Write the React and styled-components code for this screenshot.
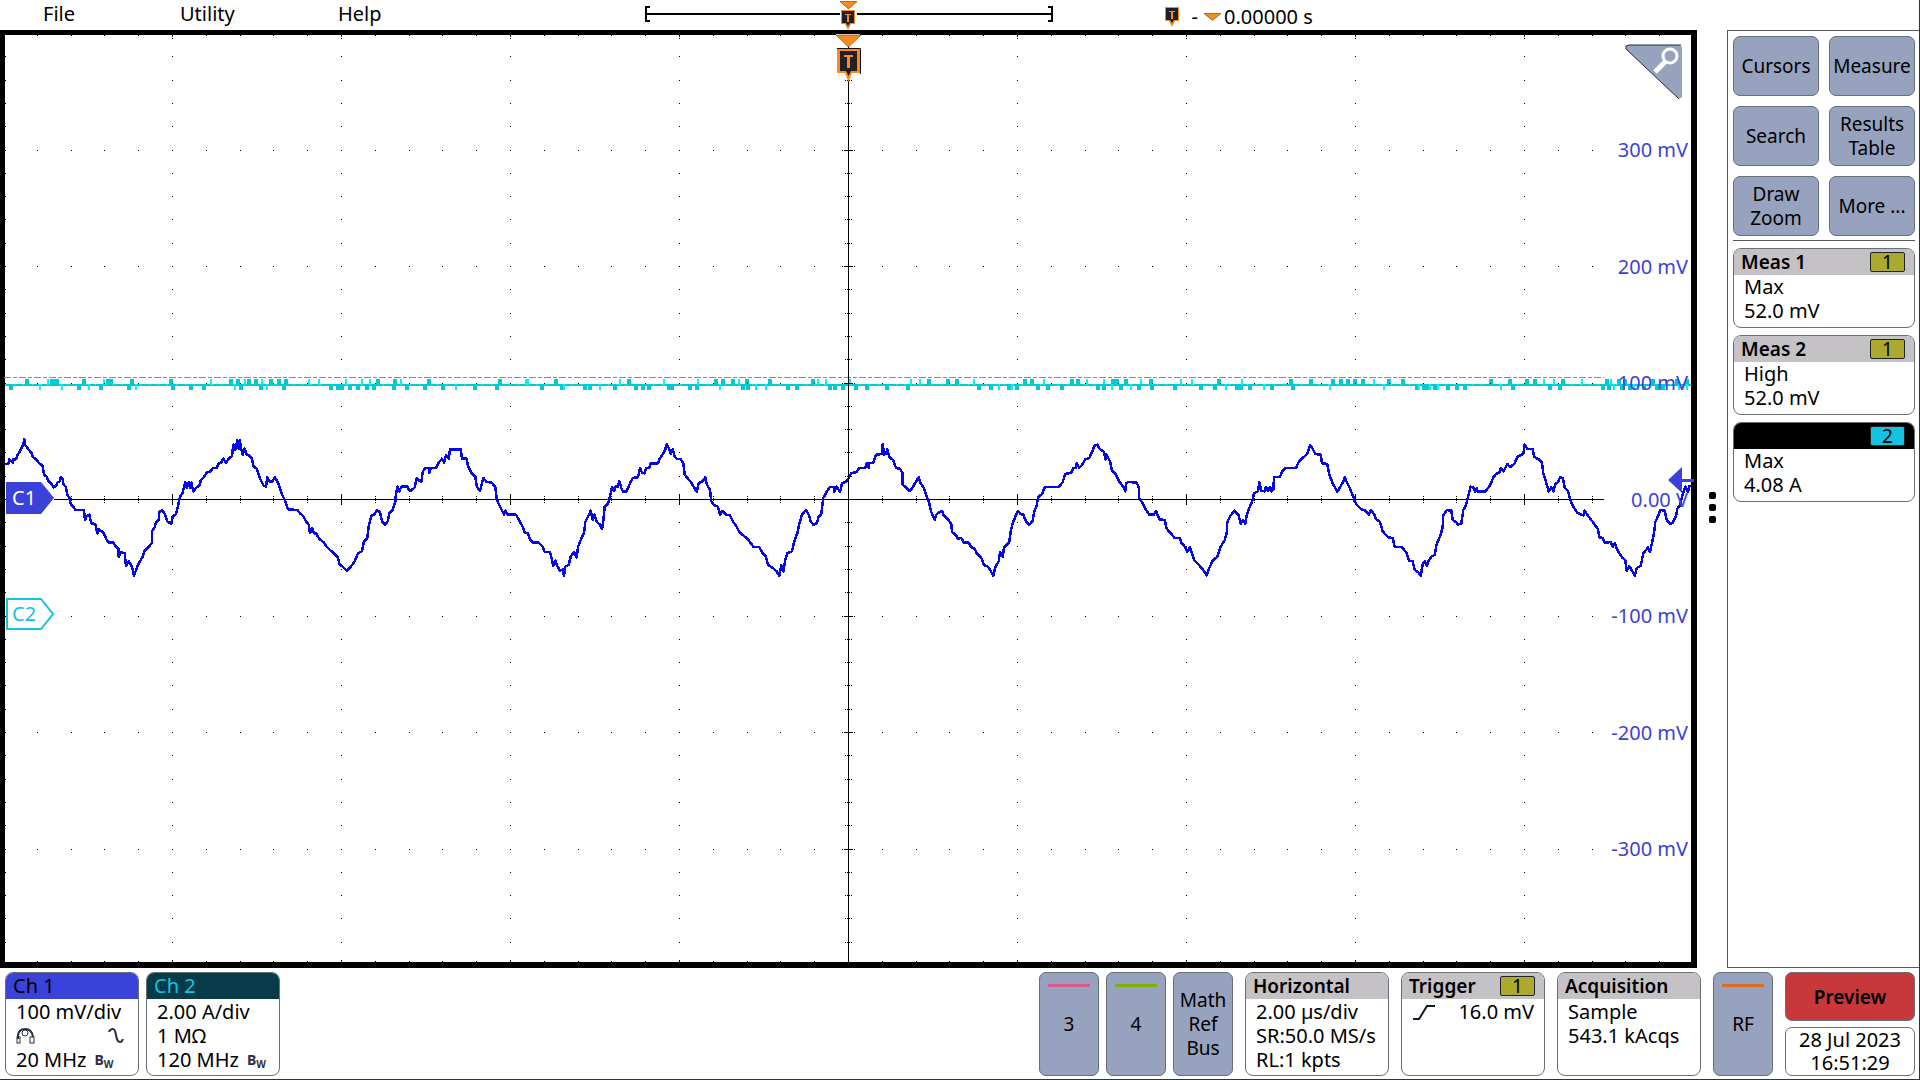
import React from "react";
import styled, { createGlobalStyle } from "styled-components";

const FONT = '"Noto Sans", "Open Sans", sans-serif';
const C = {
  ch1: "#3b42d9",
  ch2: "#14c3e0",
  steel: "#96a2be",
  edge: "#697078",
  head: "#c5c2c6",
  olive: "#aba92f",
  orange: "#f68b1f",
  dark: "#231f26",
};

const GlobalStyle = createGlobalStyle`
  * { box-sizing: border-box; }
  html, body, #root { height: 100%; }
  body { margin: 0; background: #fff; color: #000; font: 20px/24px ${FONT}; }
  button { font: inherit; color: inherit; cursor: pointer; margin: 0; }
`;

const Screen = styled.div`
  display: flex;
  flex-direction: column;
  height: 100vh;
  min-height: 720px;
  overflow: hidden;
  border-right: 1px solid #2c3440;
  border-bottom: 1px solid #2c3440;
`;

const MenuBar = styled.header`
  display: flex;
  flex: none;
  height: 30px;
  padding-left: 43px;
`;

const MenuItem = styled.button`
  width: ${(p) => p.$slot}px;
  padding: 0 0 2px;
  border: 0;
  background: none;
  text-align: left;
`;

const Ruler = styled.svg`
  display: block;
  flex: none;
`;

const Delay = styled.div`
  display: flex;
  align-items: center;
  margin-left: 110px;
  padding-top: 4px;
  white-space: pre;
`;

const Main = styled.main`
  display: flex;
  flex: 1;
  min-height: 0;
`;

const PlotFrame = styled.section`
  display: grid;
  flex: 1;
  min-width: 0;
  min-height: 0;
  border: solid #000;
  border-width: 5px 6px 6px 5px;
`;

const PlotSvg = styled.svg`
  display: block;
  width: 100%;
  height: 100%;
  min-height: 0;
  overflow: visible;
  font: 20px ${FONT};
`;

const Handle = styled.button`
  display: flex;
  flex-direction: column;
  align-items: center;
  justify-content: center;
  gap: 5px;
  width: 30px;
  padding: 17px 0 0;
  border: 0;
  background: none;
`;

const HandleDot = styled.span`
  width: 7px;
  height: 7px;
  border-radius: 2px;
  background: #000;
`;

const Sidebar = styled.aside`
  display: flex;
  flex-direction: column;
  flex: none;
  gap: 7px;
  width: 192px;
  padding: 5px 4px 5px 5px;
  border: solid #55585c;
  border-width: 1px 0 1px 1px;
`;

const Tools = styled.div`
  display: grid;
  grid-template-columns: 1fr 1fr;
  gap: 10px;
  padding-bottom: 4px;
  border-bottom: 1px solid #55585c;
`;

const Tool = styled.button`
  height: 60px;
  padding: 0;
  border: 1px solid ${C.edge};
  border-radius: 7px;
  background: ${C.steel};
  font-size: 19px;
  white-space: pre-line;
`;

const Card = styled.section`
  width: ${(p) => (p.$width ? `${p.$width}px` : "auto")};
  height: ${(p) => p.$height || 104}px;
  flex: none;
  overflow: hidden;
  border: 1px solid ${C.edge};
  border-radius: 8px;
  background: #fff;
`;

const CardHead = styled.h2`
  display: flex;
  align-items: center;
  justify-content: space-between;
  height: 26px;
  margin: 0;
  padding: 0 9px 0 7px;
  background: ${(p) => p.$bg || C.head};
  color: ${(p) => p.$fg || "#000"};
  font-size: ${(p) => (p.$plain ? 20 : 19)}px;
  font-weight: ${(p) => (p.$plain ? 400 : 600)};
`;

const Badge = styled.span`
  width: 35px;
  height: 20px;
  margin-left: auto;
  border: 1px solid #222;
  border-radius: 2px;
  background: ${(p) => p.$bg || C.olive};
  color: #000;
  font-size: 19px;
  font-weight: 400;
  line-height: 18px;
  text-align: center;
`;

const CardBody = styled.div`
  padding: ${(p) => (p.$tight ? 0 : 1)}px 10px;
`;

const Line = styled.div`
  display: flex;
  align-items: center;
  justify-content: ${(p) => (p.$spread ? "space-between" : "flex-start")};
  gap: 8px;
  height: 24px;
  white-space: nowrap;
`;

const Limit = styled.span`
  color: #2b2f45;
  font-size: 14px;
  font-weight: 700;
  sub { font-size: 10px; line-height: 0; vertical-align: -3px; }
`;

const Footer = styled.footer`
  display: flex;
  flex: none;
  gap: 12px;
  padding: 4px 4px 3px 5px;
`;

const Channels = styled.div`
  display: flex;
  gap: 7px;
  margin-right: auto;
`;

const Keys = styled.div`
  display: flex;
  gap: 7px;
`;

const Key = styled.button`
  display: grid;
  place-items: center;
  grid-template-rows: ${(p) => (p.$bar ? "3px 1fr 3px" : "1fr")};
  width: 60px;
  height: 104px;
  padding: 11px 0;
  border: 1px solid ${C.edge};
  border-radius: 7px;
  background: ${C.steel};
  font-size: 19px;
  white-space: pre-line;
`;

const KeyBar = styled.span`
  width: 42px;
  height: 3px;
  background: ${(p) => p.$color};
`;

const Status = styled.div`
  display: flex;
  flex-direction: column;
  justify-content: space-between;
  width: 130px;
`;

const Preview = styled.button`
  height: 49px;
  padding: 0;
  border: 1px solid ${C.edge};
  border-radius: 7px;
  background: #c8373a;
  font-size: 19px;
  font-weight: 600;
`;

const Clock = styled.time`
  height: 49px;
  border: 1px solid ${C.edge};
  border-radius: 7px;
  text-align: center;
  line-height: 23px;
  white-space: pre-line;
`;

/* Channel 1 record: x,y pairs in thirds of a pixel, y counted from 360. */
const CH1 = [
  [0, "15,312 25,312 28,298 38,308 40,298 48,298 52,286 58,278 65,262 70,255 73,238 76,255 85,268 95,280 98,290 110,300 118,310 128,318 132,345 140,350 145,362 155,372 160,382 168,378 172,368 180,364 182,352 188,358 190,372 198,382 202,404 208,412 212,432 220,440 226,450 252,450 255,480 260,468 268,464 274,490 286,492 292,520 298,508 312,520 318,536 326,548 340,548 348,560 356,566 356,590 364,576 374,580 378,618 386,604 396,620 402,648 408,630 412,620 420,604 428,590 434,572 450,556 456,548 456,514 464,502 468,488 476,480 478,456 486,450 494,462 502,484 514,492 518,470 528,462 534,438 540,410 548,398 556,366 560,384 566,366 570,384 574,368 580,394 590,382 598,378 602,362 612,350 620,338 632,334 638,324 650,324 656,310 664,308 670,296 678,308 686,296 696,288 700,254 706,270 712,240 716,266 720,240 722,262 728,284 734,266 740,284 746,286 756,296 760,318 770,326 776,344 782,360 790,376 798,380 802,352 810,366 818,364 824,352 832,364 838,378 846,404 856,424 864,448 892,450 900,460 910,468 918,484 926,494 930,520 936,504 942,520 948,520 958,536 972,548 980,560 990,570 1002,580 1014,592 1018,612 1030,622 1040,632 1054,618 1064,604 1074,580 1086,574 1092,544 1102,534 1106,500 1114,468 1124,462 1130,450 1140,456 1146,484 1156,494 1164,482 1168,460 1178,450 1186,424 1188,402 1192,380 1198,394 1204,380 1222,380 1230,394 1244,382 1250,354 1258,362 1264,366 1268,336 1276,324 1288,324 1288,338 1292,324 1308,324 1316,308 1326,296 1332,308 1338,284 1346,296 1350,268 1382,268 1386,296 1400,296 1404,318 1414,338 1426,350 1430,378 1440,394 1450,354 1460,366 1476,368 1486,382 1490,418 1500,440 1512,464 1516,452 1524,464 1548,464 1560,486"],
  [1440, "128,500 134,518 144,520 150,538 158,548 176,548 188,560 194,576 210,576 216,600 220,618 226,602 232,618 240,632 248,628 252,648 256,620 266,614 272,590 282,576 290,592 294,560 304,536 312,520 316,486 326,466 332,452 338,480 344,464 350,486 360,494 366,508 370,482 374,440 384,430 390,410 396,380 402,394 406,380 414,380 418,364 424,384 430,396 440,394 450,370 458,354 474,352 480,324 486,338 494,340 498,324 508,324 512,310 534,310 540,294 550,280 556,268 560,252 566,264 572,282 578,268 584,290 590,296 602,298 610,310 614,344 624,356 634,368 642,382 650,396 656,370 668,364 676,352 680,372 690,390 694,424 702,436 714,440 720,466 726,452 738,464 750,466 760,486 770,500 778,516 792,528 804,538 820,560 838,562 848,580 858,590 864,614 878,624 890,634 898,648 904,616 910,634 916,600 922,580 936,574 942,546 952,520 958,492 966,464 978,450 986,464 992,484 1000,494 1010,490 1016,470 1024,462 1030,414 1036,404 1042,392 1050,380 1062,382 1062,396 1070,380 1080,396 1086,370 1100,364 1106,354 1114,340 1130,336 1138,324 1156,324 1160,310 1166,324 1168,310 1180,308 1188,284 1206,282 1208,252 1212,284 1218,282 1222,268 1226,284"],
  [2640, "30,294 40,300 48,324 60,326 68,340 68,374 80,384 90,394 98,382 106,368 116,352 122,370 132,384 138,404 146,424 154,456 164,480 170,462 186,452 190,464 206,480 214,492 216,516 228,526 234,536 244,534 252,548 266,548 274,562 284,566 290,580 304,594 312,616 322,618 332,632 340,648 346,622 356,604 360,576 368,590 372,562 388,546 392,514 398,490 406,470 414,452 422,462 430,464 438,484 448,494 458,482 462,458 470,436 474,412 486,402 494,382 538,380 548,366 556,342 574,338 580,324 588,324 590,310 598,324 608,312 616,298 628,294 636,276 644,256 652,254 660,268 672,276 676,298 680,284 690,304 696,332 708,344 716,362 728,378 736,394 738,370 746,366 770,368 776,380 778,416 788,430 798,450 808,464 822,464 828,452 838,478 854,480 860,506 872,520 884,534 900,534 904,548 916,562 922,576 930,562 936,580 942,600 956,614 968,628 980,646 988,624 998,602 1012,590 1020,564 1034,540 1040,520 1042,486 1052,466 1064,452 1076,466 1082,492 1090,480 1096,492 1100,466 1108,444 1118,420 1122,400 1134,394 1138,366 1144,392 1154,394 1158,380 1164,394 1170,380 1174,394 1180,390 1182,352 1200,350 1208,332 1216,324 1248,324 1256,306 1268,294 1282,282 1290,256 1298,266 1306,282 1322,284 1326,310 1342,312 1348,344 1358,370 1372,396 1382,378 1390,366 1394,352 1400,366 1410,386 1420,410"],
  [3660, "404,424 410,434 424,448 436,452 446,464 452,450 462,462 468,478 480,486 488,514 504,532 518,534 524,560 546,562 558,576 568,602 578,604 584,630 594,636 602,648 608,612 614,604 620,618 626,602 634,590 644,584 650,552 662,524 668,500 670,466 680,450 694,452 698,480 708,486 714,494 724,490 730,450 738,436 744,410 752,380 762,384 766,396 770,384 772,394 796,394 806,382 814,368 820,352 828,342 838,338 842,324 850,334 856,324 862,312 870,322 884,310 892,290 910,282 914,254 922,266 938,268 942,290 956,298 966,308 970,340 978,366 986,394 994,382 1000,394 1006,372 1014,366 1020,352 1028,354 1034,382 1044,394 1050,418 1060,440 1072,458 1084,464 1090,466 1094,452 1102,464 1112,478 1124,494 1134,508 1138,532 1148,534 1154,548 1172,546 1178,560 1184,550 1194,574 1206,592 1216,600 1220,632 1228,618 1238,636 1244,648 1250,624 1262,618 1270,580 1278,570 1284,562 1290,576 1296,548 1302,520 1306,486 1316,464 1320,450 1334,452 1340,480 1350,492 1358,488 1368,468 1372,446 1380,436 1386,410 1396,380 1404,396 1408,378 1413,378"],
];

const ch1Points = CH1.flatMap(([base, run]) =>
  run.split(" ").map((pair) => {
    const [x, y] = pair.split(",").map(Number);
    return `${((base + x) / 3).toFixed(1)},${(360 + y / 3).toFixed(1)}`;
  })
).join(" ");

/* Channel 2 noise: one-count excursions up (u) or down (d), same x unit. */
const CH2 = [
  [0, "d32 u82 d122 u148 u156 u164 u172 d190 d236 u252 d270 d304 u315 u324 u334 d386 u396 d410 u512 d520 d574 d612 u636 u694 d708 u714 d722 u738 u748 u768 d784 u790 d804 u812 u838 d852 u858 u930 u960 d992 d1014 d1026 u1040 d1050 d1074 u1090 d1100 u1114 d1122 u1134 d1182 u1186 u1206 d1222 d1276 u1288 d1330 d1372 d1426 d1494 u1500"],
  [1440, "d52 u60 u142 u148 d186 u228 d246 d256 d314 d330 d362 d406 u424 u446 d468 d490 d508 u556 d566 d576 d630 d652 u656 u708 d722 u728 u760 u780 d790 u802 d804 d830 d862 u870 d924 d950 u998 u1018 u1040 d1050 d1066 d1090 u1112 d1128 d1160"],
  [2640, "d20 d84 u96 u122 u146 u204 u232 u286 d298 d332 d360 d388 d400 d412 u434 u455 d475 u496 d504 d545 u576 u594 u624 d654 u676 d672 u698 d698 u712 d722 u738 d756 u786 d776 u812 d816 d886 u906 u940 d962 d1004 u1016 d1042 d1070 d1084 u1090 d1110 d1156 d1176 u1232 d1240 u1292 d1354 u1360 u1382 u1404"],
  [3660, "u406 u430 u466 d496 u508 u550 d590 d600 d612 d624 d634 d646 d658 d684 d710 d734 u812 d846 u870 d880 u920 u946 u974 d990 u1006 d1020 u1030 u1090 d1150 u1160 d1168 u1176 d1186 u1196 d1206 u1216 d1230 d1244 d1258 d1272 u1300 d1310 u1340 d1330 u1370 d1380 u1400 d1404"],
];

const ch2Marks = CH2.flatMap(([base, run]) =>
  run.split(" ").map((m, i) => ({
    x: (base + Number(m.slice(1))) / 3,
    up: m[0] === "u",
    bright: i % 5 === 2 || i % 7 === 3,
  }))
);

const CX = 848;
const CY = 499;
const DX = 169;
const DY = 116.5;
const LEFT = 5;
const RIGHT = 1691;
const TOP = 35;
const BOTTOM = 962;
const AXIS_END = 1604;

function gridPath() {
  const dot = (x, y, w = 1, h = 1) => {
    const px = Math.round(x);
    const py = Math.round(y);
    return `M${px} ${py}h${w}v${h}h${-w}z`;
  };
  let d = "";
  for (let i = -24; i <= 24; i++) {
    const x = CX + (i * DX) / 5;
    const major = i % 5 === 0;
    if (x > LEFT && x < RIGHT) {
      d += dot(x, TOP, 1, major ? 2 : 1);
      if (major) d += dot(x, TOP + 3);
      d += dot(x, BOTTOM - (major ? 2 : 1), 1, major ? 2 : 1);
    }
    if (x <= LEFT || x > AXIS_END) continue;
    if (major) d += dot(x, CY - 5, 1, 11);
    else for (const o of [-3, -1, 1, 3]) d += dot(x, CY + o);
    for (let j = -3; j <= 3; j++) if (j) d += dot(x, CY + j * DY);
  }
  for (let j = -19; j <= 19; j++) {
    const y = CY + (j * DY) / 5;
    const major = j % 5 === 0;
    d += dot(LEFT, y);
    if (y > 78 && major) d += dot(CX - 4, y, 9, 1) + dot(CX - 6, y) + dot(CX + 6, y);
    else if (y > 78) for (const o of [-3, -1, 1, 3]) d += dot(CX + o, y);
    for (let i = -4; i <= 4; i++) if (i) d += dot(CX + i * DX, y);
  }
  return d;
}

const LABELS = ["300 mV", "200 mV", "100 mV", "0.00 V", "-100 mV", "-200 mV", "-300 mV"];

function SmallTrigger({ x, y }) {
  return (
    <g transform={`translate(${x} ${y})`}>
      <path d="M0 0h14v14h-4l-3 6l-3-6h-4z" fill={C.orange} />
      <path d="M1 1h12v12h-4l-2 3l-2-3h-4z" fill={C.dark} />
      <path d="M4 4h6v1h-2v7h-2v-7h-2z" fill={C.orange} />
    </g>
  );
}

function Plot() {
  return (
    <PlotSvg viewBox="5 35 1686 927" role="img" aria-label="Waveform display">
      <g shapeRendering="crispEdges">
        <rect x="54" y={CY} width={AXIS_END - 54} height="1" />
        <path d="M4 377.5H1604" stroke="#12bcd0" strokeDasharray="7 2 4 2" />
        <path d={`M${LEFT} 384.5H${RIGHT}`} stroke="#00cbd2" strokeWidth="2" />
        <path d={`M${LEFT} 384.5H${RIGHT}`} stroke="#5fe6ea" strokeDasharray="1 8" />
        {ch2Marks.map((m, i) => (
          <rect
            key={i}
            x={Math.round(m.x) - 2}
            y={m.up ? 379 : 384}
            width={m.bright ? 2 : 4}
            height="6"
            fill={m.bright ? "#00f6fa" : "#00cbd2"}
          />
        ))}
        <polyline points={ch1Points} fill="none" stroke="#0505ea" strokeWidth="2.5" strokeLinejoin="round" />
        <path d={gridPath()} fill="#000" />
      </g>
      <rect x={CX} y="35" width="1" height="927" shapeRendering="crispEdges" />

      <g fill={C.ch1} textAnchor="end">
        {LABELS.map((text, i) => (
          <text key={text} x="1688" y={Math.round(157 + i * DY)}>{text}</text>
        ))}
      </g>

      <path d="M6 482H41L54 498L41 514H6z" fill={C.ch1} />
      <path d="M7 599H41L53 614L41 629H7z" fill="#fff" stroke={C.ch2} strokeWidth="2" />
      <text x="12" y="505" fill="#fff">C1</text>
      <text x="12" y="621" fill={C.ch2}>C2</text>

      <path d="M1668 480L1682 467V479H1694V482H1682V493z" fill={C.ch1} />

      <path d="M1629 45H1680L1682 47V97L1679 99L1626 49V46z" fill={C.steel} />
      <path d="M1679 99L1626 49V46L1629 45H1681" fill="none" stroke="#222b3c" />
      <circle cx="1670" cy="56" r="7" fill="none" stroke="#fff" strokeWidth="3" />
      <path d="M1665 62L1655 72" stroke="#fff" strokeWidth="5" />

      <rect x="836" y="34" width="24" height="1" fill="#fff" />
      <path d="M836 35H861L848.5 47z" fill={C.orange} stroke="#3a2408" strokeWidth="0.5" />
      <path d="M837 48H860V73H852L848.5 82L845 73H837z" fill={C.orange} />
      <path d="M837 48.5H860.5V74" fill="none" stroke="#111" />
      <path d="M840 51H857V71H851L848.5 76L846 71H840z" fill={C.dark} />
      <path d="M844 55H853V57H850V68H847V57H844z" fill={C.orange} />
    </PlotSvg>
  );
}

function ProbeIcon() {
  return (
    <svg width="20" height="18" viewBox="0 0 20 18" fill="none" stroke="#2b2f45" strokeWidth="2" aria-hidden="true">
      <path d="M2 12V8Q3 2 9 2Q16 2 17 10" />
      <circle cx="9" cy="6" r="3" strokeWidth="1" />
      <rect x="1" y="10" width="3" height="6" strokeWidth="1" />
      <rect x="14" y="10" width="4" height="6" strokeWidth="1" />
    </svg>
  );
}

function SineIcon() {
  return (
    <svg width="20" height="18" viewBox="0 0 20 18" fill="none" stroke="#2b2f45" strokeWidth="2" aria-hidden="true">
      <path d="M1 5Q2 2 5 2Q7 2 8 8Q9 15 12 15Q14 15 15 12" />
    </svg>
  );
}

function EdgeIcon() {
  return (
    <svg width="24" height="18" viewBox="0 0 24 18" fill="none" stroke="#111a28" strokeWidth="2" aria-hidden="true">
      <path d="M1 16H7L15 3H23" />
    </svg>
  );
}

function Bandwidth() {
  return <Limit>B<sub>W</sub></Limit>;
}

function Measurement({ title, source, bg, badge, name, value }) {
  return (
    <Card $height={80}>
      <CardHead $bg={bg}>{title}<Badge $bg={badge}>{source}</Badge></CardHead>
      <CardBody $tight>
        <Line>{name}</Line>
        <Line>{value}</Line>
      </CardBody>
    </Card>
  );
}

export default function App() {
  return (
    <Screen>
      <GlobalStyle />
      <MenuBar>
        <MenuItem $slot={137}>File</MenuItem>
        <MenuItem $slot={158}>Utility</MenuItem>
        <MenuItem $slot={302}>Help</MenuItem>
        <Ruler width="415" height="30" viewBox="640 0 415 30" role="img" aria-label="Record view">
          <path d="M650 7H646V21H650M646 14H1052M1048 7H1052V21H1048" fill="none" stroke="#000" strokeWidth="2" shapeRendering="crispEdges" />
          <rect x="840" y="10" width="17" height="8" fill="#fff" />
          <path d="M840 1.5H857L848.5 9z" fill={C.orange} stroke="#3a2408" strokeWidth="0.5" />
          <SmallTrigger x={841} y={10} />
        </Ruler>
        <Delay>
          <svg width="16" height="24" viewBox="0 0 16 24" aria-hidden="true">
            <SmallTrigger x={0} y={2} />
          </svg>
          {"  - "}
          <svg width="21" height="8" viewBox="0 0 21 8" aria-hidden="true">
            <path d="M1 0.5H18L9.5 7.5z" fill={C.orange} stroke="#3a2408" strokeWidth="0.5" />
          </svg>
          0.00000 s
        </Delay>
      </MenuBar>

      <Main>
        <PlotFrame><Plot /></PlotFrame>
        <Handle aria-label="Toggle results bar">
          <HandleDot /><HandleDot /><HandleDot />
        </Handle>
        <Sidebar>
          <Tools>
            <Tool>Cursors</Tool>
            <Tool>Measure</Tool>
            <Tool>Search</Tool>
            <Tool>{"Results\nTable"}</Tool>
            <Tool>{"Draw\nZoom"}</Tool>
            <Tool>More ...</Tool>
          </Tools>
          <Measurement title="Meas 1" source="1" name="Max" value="52.0 mV" />
          <Measurement title="Meas 2" source="1" name="High" value="52.0 mV" />
          <Measurement source="2" bg="#000" badge={C.ch2} name="Max" value="4.08 A" />
        </Sidebar>
      </Main>

      <Footer>
        <Channels>
          <Card $width={134}>
            <CardHead $plain $bg={C.ch1}>Ch 1</CardHead>
            <CardBody>
              <Line>100 mV/div</Line>
              <Line $spread><ProbeIcon /><SineIcon /></Line>
              <Line>20 MHz <Bandwidth /></Line>
            </CardBody>
          </Card>
          <Card $width={134}>
            <CardHead $plain $bg="#083b49" $fg={C.ch2}>Ch 2</CardHead>
            <CardBody>
              <Line>2.00 A/div</Line>
              <Line>1 MΩ</Line>
              <Line>120 MHz <Bandwidth /></Line>
            </CardBody>
          </Card>
        </Channels>
        <Keys>
          <Key $bar><KeyBar $color="#d85c8d" />3</Key>
          <Key $bar><KeyBar $color="#7fb008" />4</Key>
          <Key>{"Math\nRef\nBus"}</Key>
        </Keys>
        <Card $width={144}>
          <CardHead>Horizontal</CardHead>
          <CardBody>
            <Line>2.00 µs/div</Line>
            <Line>SR:50.0 MS/s</Line>
            <Line>RL:1 kpts</Line>
          </CardBody>
        </Card>
        <Card $width={144}>
          <CardHead>Trigger<Badge>1</Badge></CardHead>
          <CardBody>
            <Line $spread><EdgeIcon />16.0 mV</Line>
          </CardBody>
        </Card>
        <Card $width={144}>
          <CardHead>Acquisition</CardHead>
          <CardBody>
            <Line>Sample</Line>
            <Line>543.1 kAcqs</Line>
          </CardBody>
        </Card>
        <Key $bar><KeyBar $color="#e06c22" />RF</Key>
        <Status>
          <Preview>Preview</Preview>
          <Clock>{"28 Jul 2023\n16:51:29"}</Clock>
        </Status>
      </Footer>
    </Screen>
  );
}
